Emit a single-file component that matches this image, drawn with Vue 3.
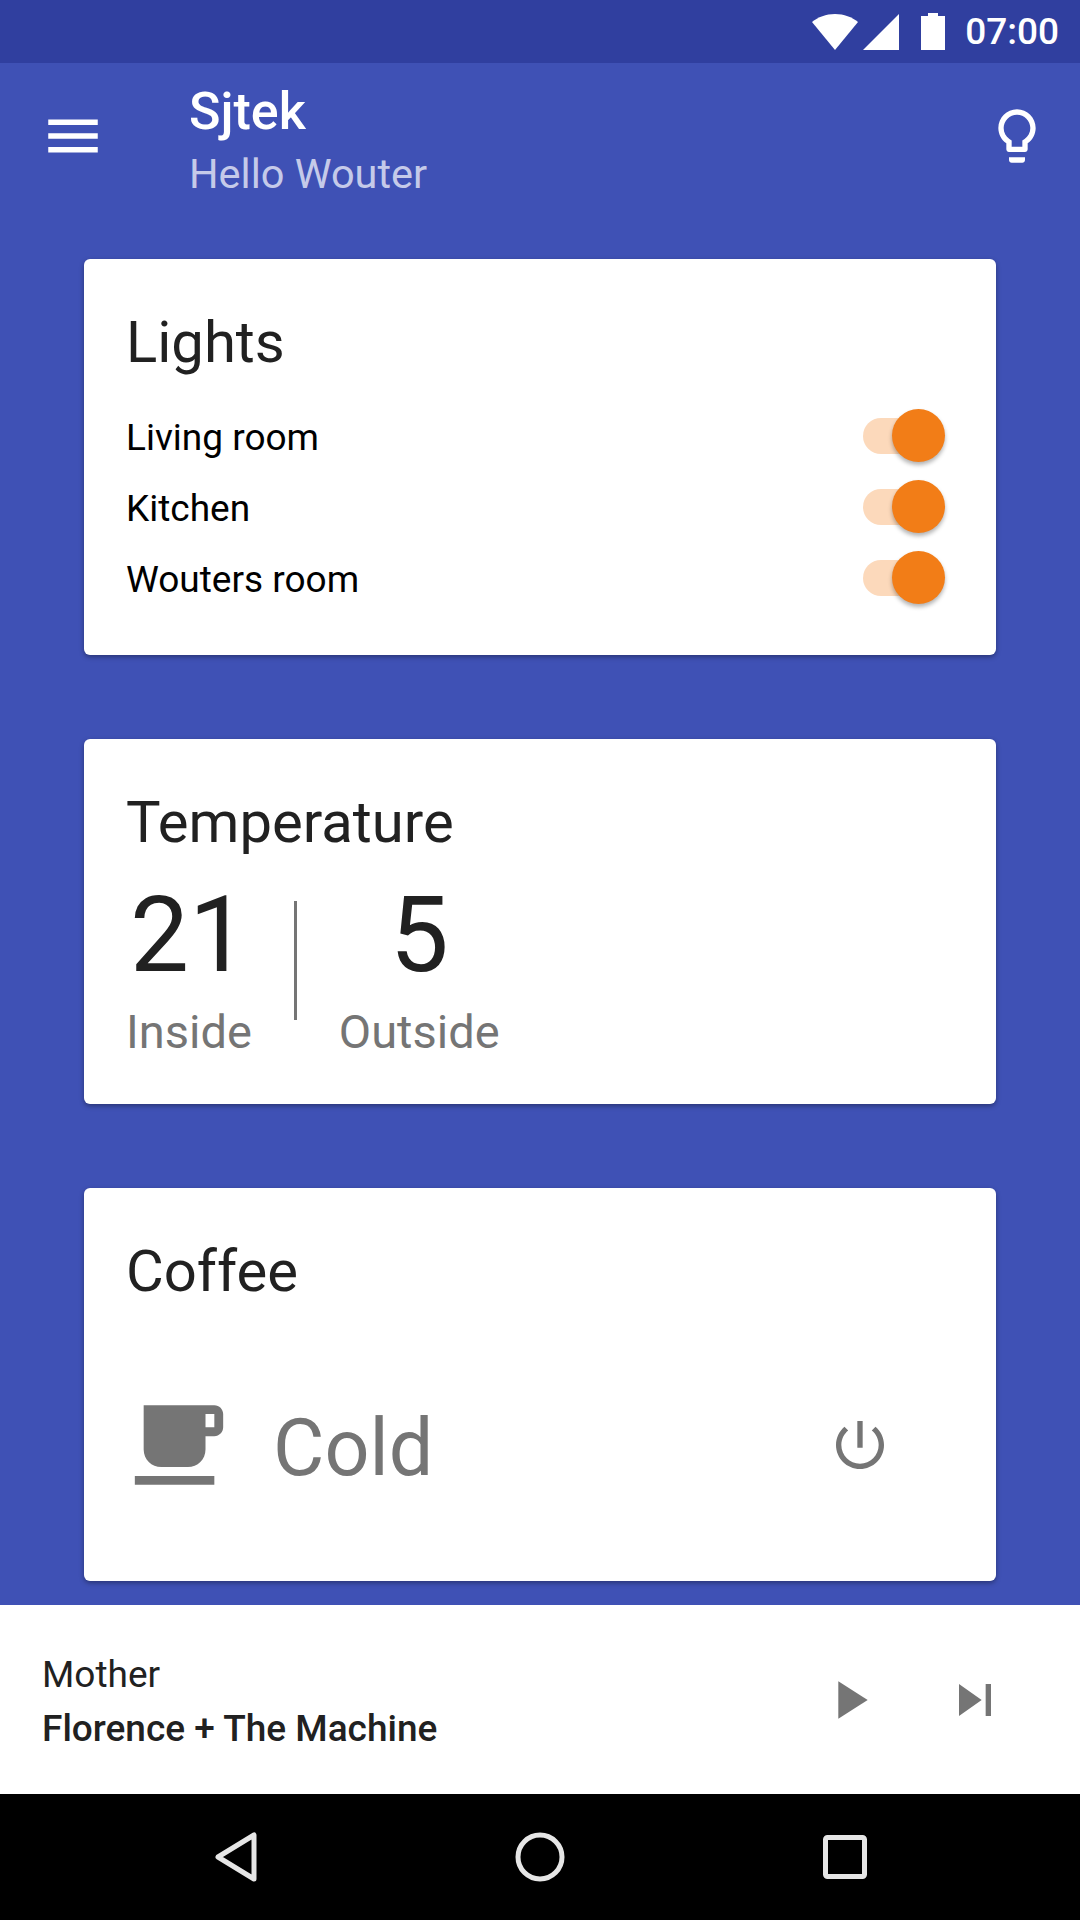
<script setup>
import { ref } from 'vue'

const lights = ref([
  { id: 'living', label: 'Living room', on: true },
  { id: 'kitchen', label: 'Kitchen', on: true },
  { id: 'wouter', label: 'Wouters room', on: true }
])

const temperatures = [
  { id: 'inside', value: '21', label: 'Inside' },
  { id: 'outside', value: '5', label: 'Outside' }
]
</script>

<template>
  <div class="screen">
    <div class="status-bar">
      <svg class="st-wifi" width="46" height="36" viewBox="0 0 46 36"><path d="M0 8C6 3 14 0 23 0s17 3 23 8L23 36z" /></svg>
      <svg class="st-signal" width="36" height="36" viewBox="0 0 36 36"><path d="M36 0v36H0z" /></svg>
      <svg class="st-battery" width="24" height="37" viewBox="0 0 24 37"><path d="M7 0h10v3h7v34H0V3h7z" /></svg>
      <span class="st-time">07:00</span>
    </div>

    <header class="app-bar">
      <svg class="menu-icon" width="66" height="66" viewBox="0 0 24 24"><path d="M3 18h18v-2H3v2zm0-5h18v-2H3v2zm0-7v2h18V6H3z" /></svg>
      <div class="app-title">
        <div class="name">Sjtek</div>
        <div class="hello">Hello Wouter</div>
      </div>
      <svg class="bulb-icon" width="64" height="64" viewBox="0 0 24 24"><path d="M9 21c0 .55.45 1 1 1h4c.55 0 1-.45 1-1v-1H9v1zm3-19C8.14 2 5 5.14 5 9c0 2.38 1.19 4.47 3 5.74V17c0 .55.45 1 1 1h6c.55 0 1-.45 1-1v-2.26c1.81-1.27 3-3.36 3-5.74 0-3.86-3.14-7-7-7zm2.85 11.1l-.85.6V16h-4v-2.3l-.85-.6C7.8 12.16 7 10.63 7 9c0-2.76 2.24-5 5-5s5 2.24 5 5c0 1.63-.8 3.16-2.15 4.1z" /></svg>
    </header>

    <main class="cards">
      <section class="card card-lights">
        <h2 class="card-title">Lights</h2>
        <div v-for="light in lights" :key="light.id" class="light-row">
          <span>{{ light.label }}</span>
          <span class="toggle" :class="{ on: light.on }"><span class="thumb"></span></span>
        </div>
      </section>

      <section class="card card-temp">
        <h2 class="card-title">Temperature</h2>
        <div class="temps">
          <template v-for="(temp, i) in temperatures" :key="temp.id">
            <div v-if="i > 0" class="temp-divider"></div>
            <div class="temp">
              <div class="temp-value">{{ temp.value }}</div>
              <div class="temp-label">{{ temp.label }}</div>
            </div>
          </template>
        </div>
      </section>

      <section class="card card-coffee">
        <h2 class="card-title">Coffee</h2>
        <div class="coffee-row">
          <svg class="cup-icon" width="106" height="106" viewBox="0 0 24 24"><path d="M20 3H4v10c0 2.21 1.79 4 4 4h6c2.21 0 4-1.79 4-4v-3h2c1.11 0 2-.9 2-2V5c0-1.11-.89-2-2-2zm0 5h-2V5h2v3zM2 21h18v-2H2v2z" /></svg>
          <span class="coffee-state">Cold</span>
          <svg class="power-icon" width="64" height="64" viewBox="0 0 24 24"><path d="M13 3h-2v10h2V3zm4.83 2.17l-1.42 1.42C17.99 7.86 19 9.81 19 12c0 3.87-3.13 7-7 7s-7-3.13-7-7c0-2.19 1.01-4.14 2.58-5.42L6.17 5.17C4.23 6.82 3 9.26 3 12c0 4.97 4.03 9 9 9s9-4.03 9-9c0-2.74-1.23-5.18-3.17-6.83z" /></svg>
        </div>
      </section>
    </main>

    <div class="player">
      <div class="track">
        <div class="song">Mother</div>
        <div class="artist">Florence + The Machine</div>
      </div>
      <svg class="play-icon" width="64" height="64" viewBox="0 0 24 24"><path d="M8 5v14l11-7z" /></svg>
      <svg class="next-icon" width="64" height="64" viewBox="0 0 24 24"><path d="M6 18l8.5-6L6 6v12zM16 6v12h2V6h-2z" /></svg>
    </div>

    <nav class="nav-bar">
      <svg width="46" height="54" viewBox="0 0 46 54"><path d="M41 5v44L5 27z" /></svg>
      <svg width="54" height="54" viewBox="0 0 54 54"><circle cx="27" cy="27" r="22" /></svg>
      <svg width="48" height="48" viewBox="0 0 48 48"><rect x="4.5" y="4.5" width="39" height="39" rx="2" /></svg>
    </nav>
  </div>
</template>

<style>
html, body {
  margin: 0;
  background: #3f51b5;
}
</style>

<style scoped>
.screen {
  width: 1080px;
  height: 1920px;
  display: flex;
  flex-direction: column;
  overflow: hidden;
  background: #3f51b5;
  font-family: Roboto, "Liberation Sans", sans-serif;
}

.status-bar {
  height: 63px;
  flex-shrink: 0;
  background: #303f9f;
  display: flex;
  align-items: center;
  padding-right: 21px;
  box-sizing: border-box;
  justify-content: flex-end;
}

.status-bar svg {
  fill: #fff;
}

.st-signal {
  margin-left: 5px;
}

.st-battery {
  margin-left: 22px;
}

.st-time {
  margin-left: 20px;
  color: #fff;
  font-size: 37px;
  font-weight: 500;
}

.app-bar {
  height: 196px;
  flex-shrink: 0;
  box-sizing: border-box;
  display: flex;
  align-items: flex-start;
  padding: 17px 31px 0 40px;
}

.menu-icon {
  fill: #fff;
  margin-top: 23px;
}

.app-title {
  margin-left: 83px;
  flex: 1;
}

.name {
  color: #fff;
  font-size: 52px;
  font-weight: 500;
  line-height: 64px;
}

.hello {
  color: #c5cae9;
  font-size: 41.5px;
  line-height: 59px;
}

.bulb-icon {
  fill: #fff;
  margin-top: 24px;
}

.cards {
  flex: 1;
  display: flex;
  flex-direction: column;
  gap: 84px;
  padding: 0 84px;
}

.card {
  background: #fff;
  border-radius: 6px;
  box-shadow: 0 2px 5px rgba(0, 0, 0, 0.35);
  padding: 0 42px;
  box-sizing: border-box;
}

.card-title {
  margin: 0;
  color: #212121;
  font-size: 58px;
  font-weight: 400;
  line-height: 66px;
  padding-top: 50px;
}

.card-lights {
  height: 396px;
}

.light-row {
  display: flex;
  align-items: center;
  justify-content: space-between;
  height: 71px;
  font-size: 37px;
  color: #000;
}

.card-lights .card-title {
  margin-bottom: 27px;
}

.toggle {
  position: relative;
  width: 72px;
  height: 36px;
  margin-right: 19px;
  margin-bottom: 3px;
  border-radius: 18px;
  background: #fcd9bb;
}

.thumb {
  position: absolute;
  top: -9px;
  right: -10px;
  width: 53px;
  height: 53px;
  border-radius: 50%;
  background: #f27d17;
  box-shadow: 0 3px 4px rgba(0, 0, 0, 0.3);
}

.card-temp {
  height: 365px;
}

.temps {
  display: flex;
  align-items: center;
  gap: 42px;
  margin-top: 19px;
}

.temp {
  text-align: center;
}

.temp-value {
  font-size: 105px;
  line-height: 124px;
  color: #212121;
}

.temp-label {
  margin-top: 7px;
  font-size: 47px;
  line-height: 54px;
  color: #757575;
}

.temp-divider {
  width: 3px;
  height: 119px;
  margin-bottom: 13px;
  background: #757575;
}

.card-coffee {
  height: 393px;
}

.coffee-row {
  display: flex;
  align-items: center;
  margin-top: 88px;
}

.cup-icon {
  fill: #757575;
}

.coffee-state {
  margin-left: 41px;
  margin-top: 6px;
  flex: 1;
  font-size: 79px;
  color: #757575;
}

.power-icon {
  fill: #757575;
  margin-right: 62px;
}

.player {
  height: 189px;
  flex-shrink: 0;
  box-sizing: border-box;
  background: #fff;
  display: flex;
  align-items: center;
  padding: 4px 73px 0 42px;
}

.track {
  flex: 1;
}

.song {
  font-size: 37px;
  line-height: 54px;
  color: #212121;
}

.artist {
  font-size: 37px;
  line-height: 54px;
  font-weight: 500;
  color: #212121;
}

.play-icon,
.next-icon {
  fill: #757575;
  margin-top: -4px;
}

.next-icon {
  margin-left: 62px;
}

.nav-bar {
  height: 126px;
  flex-shrink: 0;
  background: #000;
  display: flex;
  align-items: center;
  justify-content: space-between;
  padding: 0 211px 0 213px;
}

.nav-bar svg {
  fill: none;
  stroke: #e6e6e6;
  stroke-width: 5;
  stroke-linejoin: round;
}
</style>
